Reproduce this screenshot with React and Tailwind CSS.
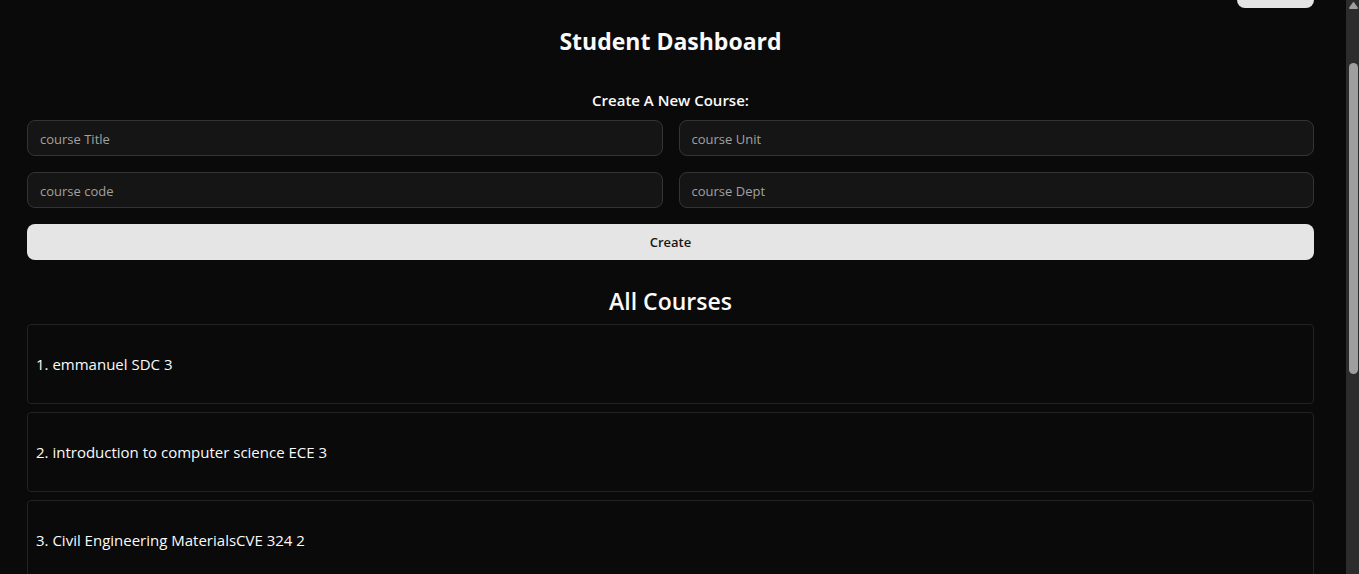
const fields = [
  { id: 'title', label: 'course Title' },
  { id: 'unit', label: 'course Unit' },
  { id: 'code', label: 'course code' },
  { id: 'dept', label: 'course Dept' },
];

const courses = [
  '1. emmanuel SDC 3',
  '2. introduction to computer science ECE 3',
  '3. Civil Engineering MaterialsCVE 324 2',
];

function CourseForm() {
  return (
    <form className="mt-2 grid grid-cols-2 gap-4" onSubmit={(e) => e.preventDefault()}>
      {fields.map((field) => (
        <input
          key={field.id}
          id={field.id}
          name={field.id}
          type="text"
          aria-label={field.label}
          placeholder={field.label}
          className="h-9 w-full min-w-0 rounded-lg border border-[#343434] bg-[#151515] px-3 pt-0.5 text-[13px] text-neutral-50 outline-none placeholder:text-[#a1a1a1]"
        />
      ))}
      <button
        type="submit"
        className="col-span-2 h-9 rounded-lg bg-[#e5e5e5] pt-0.5 text-[13px] font-semibold text-neutral-900"
      >
        Create
      </button>
    </form>
  );
}

function Scrollbar() {
  return (
    <div aria-hidden="true" className="flex w-[13px] shrink-0 flex-col bg-[#2c2c2c] pl-[3px] pr-px">
      <svg viewBox="0 0 9 7" className="mt-0.5 h-[7px] w-[9px]" fill="#9f9f9f">
        <path d="M3.8.4Q4.5-.3 5.2.4L8.8 5.6Q9.2 7 8 7H1Q-.2 7 .2 5.6Z" />
      </svg>
      <div className="mt-[54px] h-[311px] rounded-full bg-[#9f9f9f]" />
    </div>
  );
}

export default function App() {
  return (
    <div className="flex h-screen overflow-hidden bg-[#0a0a0a] font-['Open_Sans','Noto_Sans',sans-serif] text-neutral-50">
      <main className="min-w-0 flex-1 pl-[27px] pr-8">
        <div className="flex justify-end">
          <button type="button" aria-label="Account" className="h-2 w-[77px] rounded-b-lg bg-[#e5e5e5]" />
        </div>
        <h1 className="mt-[17px] text-center text-[23px] leading-8 font-bold">Student Dashboard</h1>
        <section>
          <h2 className="mt-[31px] text-center text-[15px] leading-6 font-semibold">Create A New Course:</h2>
          <CourseForm />
        </section>
        <section>
          <h2 className="mt-[25px] text-center text-[23px] leading-8 font-semibold">All Courses</h2>
          <ul className="mt-[7px] flex flex-col gap-2">
            {courses.map((course) => (
              <li
                key={course}
                className="flex h-20 shrink-0 items-center rounded-sm border border-[#222222] px-2 text-[15px] leading-6"
              >
                {course}
              </li>
            ))}
          </ul>
        </section>
      </main>
      <Scrollbar />
    </div>
  );
}
